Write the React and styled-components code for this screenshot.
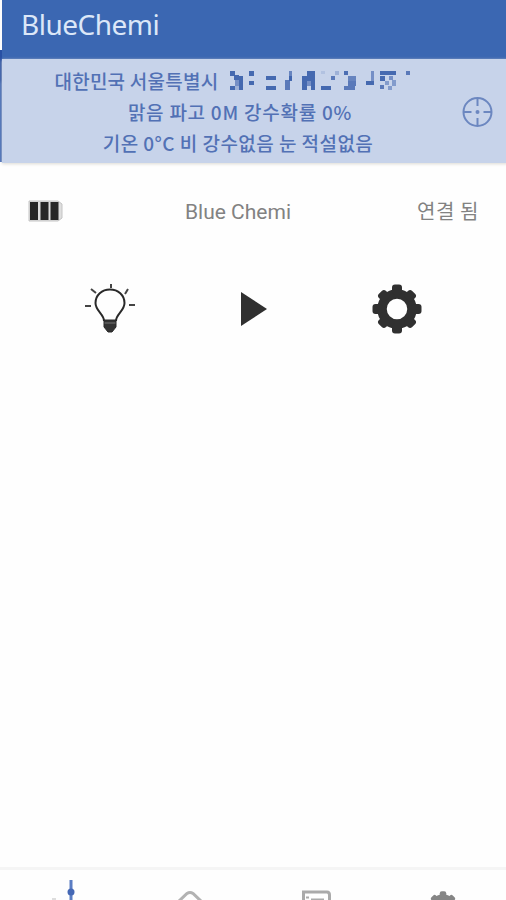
import React from 'react';
import styled, { createGlobalStyle } from 'styled-components';

const colors = {
    BLUE: '#3b67b2',
    BLUE_TEXT: '#5271b5',
    BLUE_PALE: '#c7d3ea',
    DARK: '#303030',
    GREY: '#828282',
};

const GlobalStyle = createGlobalStyle`
    body {
        margin: 0;
        background: #fefefe;
        overflow: hidden;
    }
    svg {
        display: block;
    }
`;

const Screen = styled.div`
    display: flex;
    height: 900px;
    overflow: hidden;
    font-family: "Noto Sans CJK KR", sans-serif;
`;

const Edge = styled.div`
    width: 2px;
    flex-shrink: 0;
    height: 112px;
    margin-top: 50px;
    background: linear-gradient(#2850a4 30px, #3c64b4 34px);
`;

const Page = styled.div`
    flex: 1;
    display: flex;
    flex-direction: column;
`;

const AppBar = styled.header`
    height: 59px;
    box-sizing: border-box;
    padding: 4px 20px 0 19px;
    color: #dce7f8;
    background: ${colors.BLUE};
    font-family: "Noto Sans", sans-serif;
    font-size: 28px;
    line-height: 40px;
`;

const Title = styled.span`
    letter-spacing: ${props => props.$spacing};
`;

const Weather = styled.section`
    height: 104px;
    box-sizing: border-box;
    display: flex;
    align-items: center;
    padding: 0 14px 0 0;
    background: ${colors.BLUE_PALE};
    box-shadow: 0 1px 3px #dcdad4;
`;

const Lines = styled.div`
    width: 460px;
    flex-shrink: 0;
    margin-right: auto;
`;

const Line = styled.div`
    display: flex;
    justify-content: center;
    align-items: center;
    padding-left: ${props => props.$shift || 0}px;
    height: 31px;
    color: ${colors.BLUE_TEXT};
    font-size: 19px;
    font-weight: 500;
    letter-spacing: ${props => props.$spacing || 0}px;
    white-space: pre;
`;

const Status = styled.div`
    height: 96px;
    box-sizing: border-box;
    padding: 0 29px 0 24px;
    display: grid;
    grid-template-columns: 159px auto 1fr;
    align-items: center;
    color: ${colors.GREY};
    font-size: 20px;
`;

const DeviceName = styled.span`
    font-family: Roboto, sans-serif;
    font-size: 21px;
    padding-top: 1px;
`;

const State = styled.span`
    justify-self: end;
    padding-bottom: 1px;
    letter-spacing: 0.6px;
`;

const Actions = styled.div`
    display: grid;
    grid-template-columns: 144px 143px 144px;
    justify-items: center;
    align-items: center;
    height: 100px;
    padding-left: 36px;
`;

const TabBar = styled.nav`
    height: 33px;
    box-sizing: border-box;
    margin: auto 0 0 -2px;
    padding-right: 2px;
    border-top: 3px solid #f5f5f5;
    display: grid;
    grid-template-columns: repeat(4, 1fr);
    justify-items: center;
`;

// rows of the scrambled address: x, y, width, height, opacity
const blocks = [
    [230, 71, 5, 5], [234, 75, 5, 5], [239, 76, 4, 14], [230, 86, 5, 4], [235, 80, 4, 6, 0.6], [235, 86, 4, 4, 0.3],
    [249, 71, 5, 5], [249, 81, 5, 4], [266, 76, 10, 4], [266, 86, 10, 4],
    [289, 71, 3, 9, 0.7], [285, 80, 5, 10, 0.8], [289, 76, 3, 5],
    [302, 76, 5, 14], [307, 71, 8, 10], [307, 81, 4, 5, 0.6], [311, 81, 4, 9],
    [321, 86, 10, 4], [331, 76, 4, 4, 0.8], [335, 71, 4, 4, 0.3], [321, 71, 4, 3, 0.15],
    [344, 71, 4, 4, 0.9], [348, 76, 8, 5, 0.7], [348, 81, 8, 5, 0.8], [344, 86, 11, 4, 0.8],
    [366, 81, 8, 4], [371, 71, 3, 10, 0.6], [380, 71, 16, 4], [380, 76, 5, 5], [389, 76, 4, 4, 0.6],
    [385, 81, 4, 4, 0.5], [380, 85, 4, 4, 0.8], [388, 86, 4, 4, 0.5], [392, 80, 4, 6, 0.5],
    [406, 71, 4, 4, 0.8],
];

const Scrambled = () => (
    <svg width="184" height="24" viewBox="228 68 184 24" fill="#3e63ad">
        {blocks.map(([x, y, w, h, o], index) => (
            <rect key={index} x={x} y={y} width={w} height={h} opacity={o || 0.95} />
        ))}
    </svg>
);

const Locate = () => (
    <svg width="32" height="32" viewBox="0 0 32 32" fill="none" stroke="#6c87c0" strokeWidth="2">
        <circle cx="15.500" cy="17" r="14" />
        <path d="M15.500 3v8M15.500 23v8M1.500 17h8M21.500 17h8" />
        <circle cx="15.500" cy="17" r="1" />
    </svg>
);

const Battery = () => (
    <svg width="37" height="24" viewBox="0 0 37 24">
        <path d="M3 2H32L36 5V19L32 22H3Z" fill="#dedede" stroke="#c4c4c4" />
        <path d="M4 3h8v18H4zM14.500 3h8v18h-8zM24.500 3h8v18h-8z" fill="#272727" />
    </svg>
);

const Bulb = () => (
    <svg width="52" height="52" viewBox="0 0 52 52" fill="none" stroke="#292929">
        <path d="M20 38C20 31 11.500 28 11.500 20C11.500 12 18 6.500 26 6.500S40.500 12 40.500 20C40.500 28 32 31 32 38" strokeWidth="2" />
        <path d="M20 37H32V44L28 49H24L20 44Z" fill="#333" />
        <path d="M20.500 40h11" stroke="#777" />
        <path d="M27 1v4M7 6l5 4M44 6l-3 5M1 23h6M45 22h6" stroke="#444" strokeWidth="2" />
    </svg>
);

const Play = () => (
    <svg width="28" height="36" viewBox="0 0 28 36">
        <path d="M1 1L27 18L1 35Z" fill={colors.DARK} />
    </svg>
);

const Gear = ({ size, color }) => (
    <svg width={size} height={size} viewBox="0 0 50 50">
        <circle cx="25" cy="25" r="15" fill="none" stroke={color} strokeWidth="9.500" />
        {[0, 45, 90, 135, 180, 225, 270, 315].map(angle => (
            <rect
                key={angle}
                x="20"
                y={angle % 90 ? 1.5 : 0.5}
                width="10"
                height="10"
                rx="3"
                fill={color}
                transform={`rotate(${angle} 25 25)`}
            />
        ))}
    </svg>
);

const Remote = () => (
    <svg width="40" height="30" viewBox="0 0 40 30">
        <path d="M28 10v20" stroke="#5b7dc3" strokeWidth="3" />
        <circle cx="28" cy="22" r="3.500" fill="#4568b5" />
        <path d="M9 29h4" stroke="#ddd" strokeWidth="2" />
    </svg>
);

const Home = () => (
    <svg width="36" height="30" viewBox="0 0 36 30">
        <path d="M6 32L15 23.500Q18 21.500 21 23.500L30 32" fill="none" stroke="#b2b2b2" strokeWidth="3" />
    </svg>
);

const List = () => (
    <svg width="32" height="30" viewBox="0 0 32 30" fill="none" stroke="#aaa" strokeWidth="3">
        <path d="M3.500 32V22H27Q29.500 22 29.500 25V32" />
        <path d="M6 27.500h3M11 29.500h13" strokeWidth="2" />
    </svg>
);

const Cog = styled.div`
    padding-top: 21px;
`;

const App = () => {
    return (
        <>
            <GlobalStyle />
            <Screen>
                <Edge />
                <Page>
                    <AppBar><Title $spacing="-0.5px">BlueChemi</Title></AppBar>
                    <Weather>
                        <Lines>
                            <Line $shift={2} $spacing={0.25}>대한민국 서울특별시  <Scrambled /></Line>
                            <Line $shift={16} $spacing={0.75}>맑음 파고 0M 강수확률 0%</Line>
                            <Line $shift={12} $spacing={0.45}>기온 0°C 비 강수없음 눈 적설없음</Line>
                        </Lines>
                        <Locate />
                    </Weather>
                    <Status>
                        <Battery />
                        <DeviceName>Blue Chemi</DeviceName>
                        <State>연결 됨</State>
                    </Status>
                    <Actions>
                        <Bulb />
                        <Play />
                        <Gear size={50} color={colors.DARK} />
                    </Actions>
                    <TabBar>
                        <Remote />
                        <Home />
                        <List />
                        <Cog><Gear size={32} color="#858585" /></Cog>
                    </TabBar>
                </Page>
            </Screen>
        </>
    );
};

export default App;
